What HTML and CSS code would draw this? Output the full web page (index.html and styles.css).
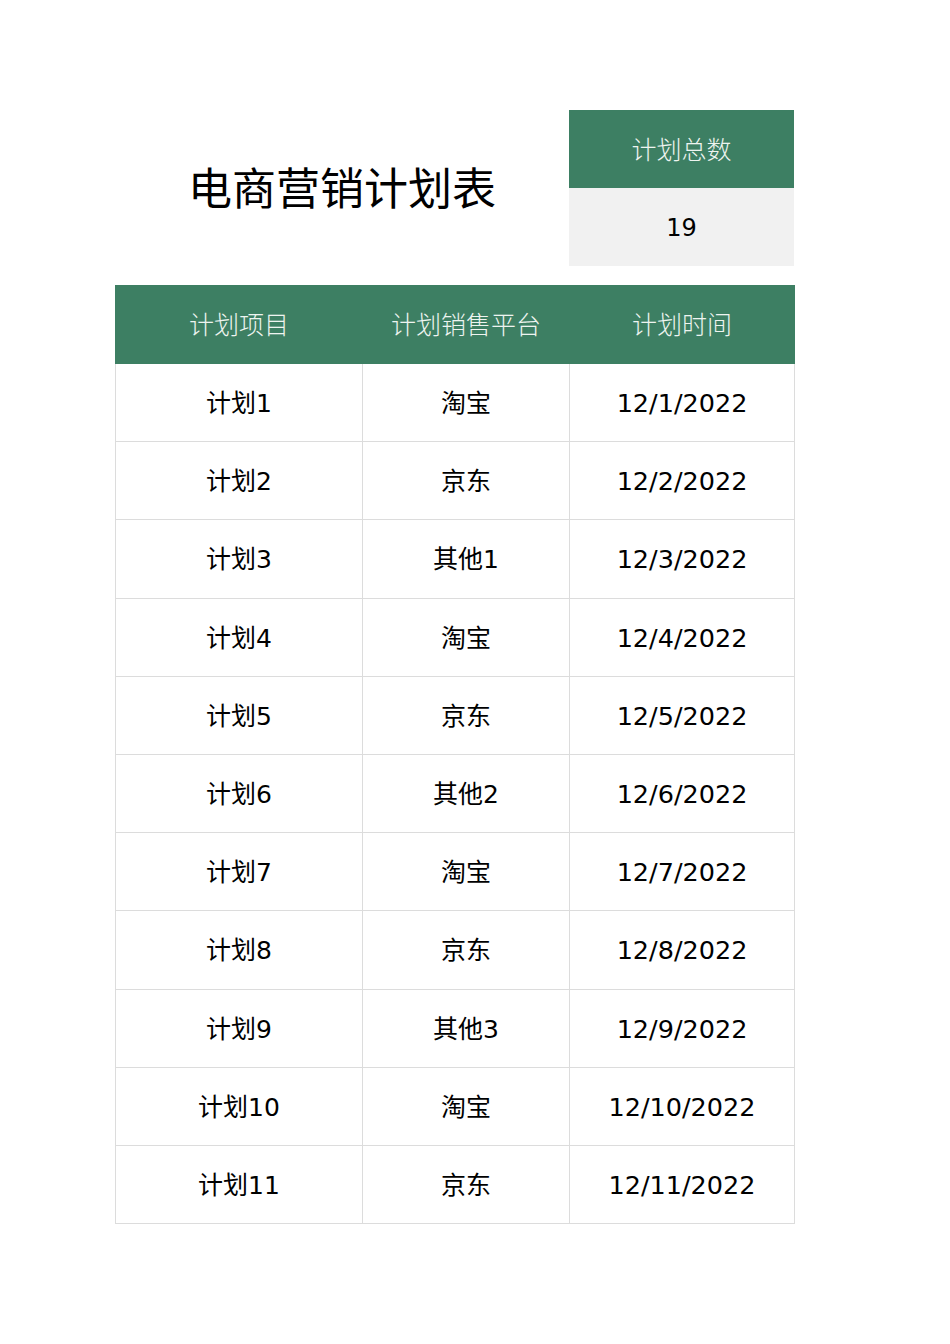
FILE: index.html
```html
<!DOCTYPE html>
<html lang="zh">
<head>
<meta charset="utf-8">
<title>电商营销计划表</title>
<link rel="stylesheet" href="styles.css">
</head>
<body>
<div class="sheet">
  <div class="top">
    <div class="title-area"><h1 class="title">电商营销计划表</h1></div>
    <div class="summary">
      <div class="summary-head">计划总数</div>
      <div class="summary-value">19</div>
    </div>
  </div>
  <table class="plan">
    <colgroup>
      <col class="c1"><col class="c2"><col class="c3">
    </colgroup>
    <thead>
      <tr><th>计划项目</th><th>计划销售平台</th><th>计划时间</th></tr>
    </thead>
    <tbody>
      <tr><td>计划1</td><td>淘宝</td><td class="date">12/1/2022</td></tr>
      <tr><td>计划2</td><td>京东</td><td class="date">12/2/2022</td></tr>
      <tr><td>计划3</td><td>其他1</td><td class="date">12/3/2022</td></tr>
      <tr><td>计划4</td><td>淘宝</td><td class="date">12/4/2022</td></tr>
      <tr><td>计划5</td><td>京东</td><td class="date">12/5/2022</td></tr>
      <tr><td>计划6</td><td>其他2</td><td class="date">12/6/2022</td></tr>
      <tr><td>计划7</td><td>淘宝</td><td class="date">12/7/2022</td></tr>
      <tr><td>计划8</td><td>京东</td><td class="date">12/8/2022</td></tr>
      <tr><td>计划9</td><td>其他3</td><td class="date">12/9/2022</td></tr>
      <tr><td>计划10</td><td>淘宝</td><td class="date">12/10/2022</td></tr>
      <tr><td>计划11</td><td>京东</td><td class="date">12/11/2022</td></tr>
    </tbody>
  </table>
</div>
</body>
</html>
```
FILE: styles.css
```css
html, body {
  margin: 0;
  padding: 0;
  background: #ffffff;
}
body {
  font-family: "DejaVu Sans", "Noto Sans CJK SC", sans-serif;
  color: #000;
}
.sheet {
  width: 679px;
  margin-left: 115px;
  padding-top: 110px;
}
.top {
  display: flex;
  height: 156px;
}
.title-area {
  flex: 1;
  display: flex;
  align-items: center;
  justify-content: center;
  padding-bottom: 4px;
}
.title {
  margin: 0;
  font-family: "Noto Sans CJK SC", sans-serif;
  font-weight: 400;
  font-size: 44px;
  color: #000;
}
.summary {
  width: 225px;
  display: flex;
  flex-direction: column;
}
.summary-head {
  height: 78px;
  background: #3d7f63;
  color: #eef4f0;
  font-size: 25px;
  display: flex;
  align-items: center;
  justify-content: center;
  font-weight: 300;
  padding-bottom: 3px;
  box-sizing: border-box;
}
.summary-value {
  height: 78px;
  background: #f1f1f1;
  font-size: 24px;
  display: flex;
  align-items: center;
  justify-content: center;
  padding-top: 2px;
  box-sizing: border-box;
}
.plan {
  margin-top: 19px;
  width: 679px;
  border-collapse: collapse;
  table-layout: fixed;
}
.c1 { width: 247px; }
.c2 { width: 207px; }
.c3 { width: 225px; }
.plan th {
  height: 73px;
  padding: 0 0 4px;
  background: #3d7f63;
  color: #eef4f0;
  font-weight: 300;
  font-size: 25px;
  text-align: center;
  border: 1px solid #3d7f63;
}
.plan td {
  height: 74.2px;
  padding: 0 0 3px;
  font-size: 25px;
  text-align: center;
  border: 1px solid #dcdcdc;
}
.plan td.date {
  font-size: 25.5px;
  padding: 1px 0 0;
  height: 76.2px;
}
```
